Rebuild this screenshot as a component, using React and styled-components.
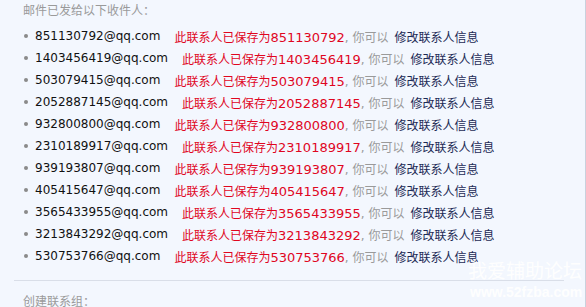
import styled, { createGlobalStyle } from 'styled-components'

const GlobalStyle = createGlobalStyle`
    html, body {
        margin: 0;
        padding: 0;
        background: #f3f7fe;
    }
`

const contacts = [
    { mail: '851130792@qq.com', id: '851130792' },
    { mail: '1403456419@qq.com', id: '1403456419' },
    { mail: '503079415@qq.com', id: '503079415' },
    { mail: '2052887145@qq.com', id: '2052887145' },
    { mail: '932800800@qq.com', id: '932800800' },
    { mail: '2310189917@qq.com', id: '2310189917' },
    { mail: '939193807@qq.com', id: '939193807' },
    { mail: '405415647@qq.com', id: '405415647' },
    { mail: '3565433955@qq.com', id: '3565433955' },
    { mail: '3213843292@qq.com', id: '3213843292' },
    { mail: '530753766@qq.com', id: '530753766' },
]

const Page = styled.div`
    position: relative;
    overflow: hidden;
    box-sizing: border-box;
    width: 586px;
    height: 307px;
    border-right: 1px solid #c9d1dd;
    background: #f3f7fe;
    font-family: 'DejaVu Sans', 'Noto Sans CJK SC', sans-serif;
    font-size: 12px;
`

const Title = styled.div`
    padding: 1px 0 0 23px;
    height: 17px;
    line-height: 17px;
    color: #9a9a9a;
    font-family: 'Noto Sans CJK SC', sans-serif;
    font-size: 12px;
`

const List = styled.ul`
    margin: 7px 0 0;
    padding: 0 0 0 24px;
    list-style: none;
`

const Item = styled.li`
    display: flex;
    align-items: center;
    height: 22px;
    white-space: nowrap;

    &::before {
        content: '';
        width: 4px;
        height: 4px;
        margin-right: 7px;
        border-radius: 50%;
        background: #8a8a8a;
    }
`

const Mail = styled.span`
    color: #111;
    margin-right: 14px;
`

const Saved = styled.span`
    color: #e0061f;
    font-family: 'Noto Sans CJK SC', sans-serif;
`

const SavedId = styled.span`
    font-family: 'DejaVu Sans', sans-serif;
    font-size: 13px;
`

const Hint = styled.span`
    color: #9a9a9a;
    margin-right: 6px;
    font-family: 'DejaVu Sans', 'Noto Sans CJK SC', sans-serif;
`

const Link = styled.a`
    color: #1c2a55;
    text-decoration: none;
    font-family: 'Noto Sans CJK SC', sans-serif;
`

const Divider = styled.hr`
    margin: 13px 21px 0 14px;
    border: none;
    border-top: 1px solid #d9dee8;
`

const Section = styled.div`
    padding: 11px 0 0 23px;
    color: #9a9a9a;
    font-family: 'Noto Sans CJK SC', sans-serif;
    font-size: 12px;
`

const Watermark = styled.div`
    position: absolute;
    left: 468px;
    top: 258px;
    color: rgba(255, 255, 255, 0.95);
    white-space: nowrap;
    pointer-events: none;
`

const MarkTitle = styled.div`
    font-family: 'Noto Sans CJK SC', sans-serif;
    font-size: 19px;
    line-height: 24px;
`

const MarkUrl = styled.div`
    margin: 2px 0 0 2px;
    font-family: 'Liberation Sans', sans-serif;
    font-weight: bold;
    font-size: 14px;
    line-height: 16px;
`

export default function App() {
    return (
        <Page>
            <GlobalStyle />
            <Title>邮件已发给以下收件人：</Title>
            <List>
                {contacts.map((c) => (
                    <Item key={c.mail}>
                        <Mail>{c.mail}</Mail>
                        <Saved>此联系人已保存为<SavedId>{c.id}</SavedId></Saved>
                        <Hint>, 你可以</Hint>
                        <Link href="#">修改联系人信息</Link>
                    </Item>
                ))}
            </List>
            <Divider />
            <Section>创建联系组：</Section>
            <Watermark>
                <MarkTitle>我爱辅助论坛</MarkTitle>
                <MarkUrl>www.52fzba.com</MarkUrl>
            </Watermark>
        </Page>
    )
}
